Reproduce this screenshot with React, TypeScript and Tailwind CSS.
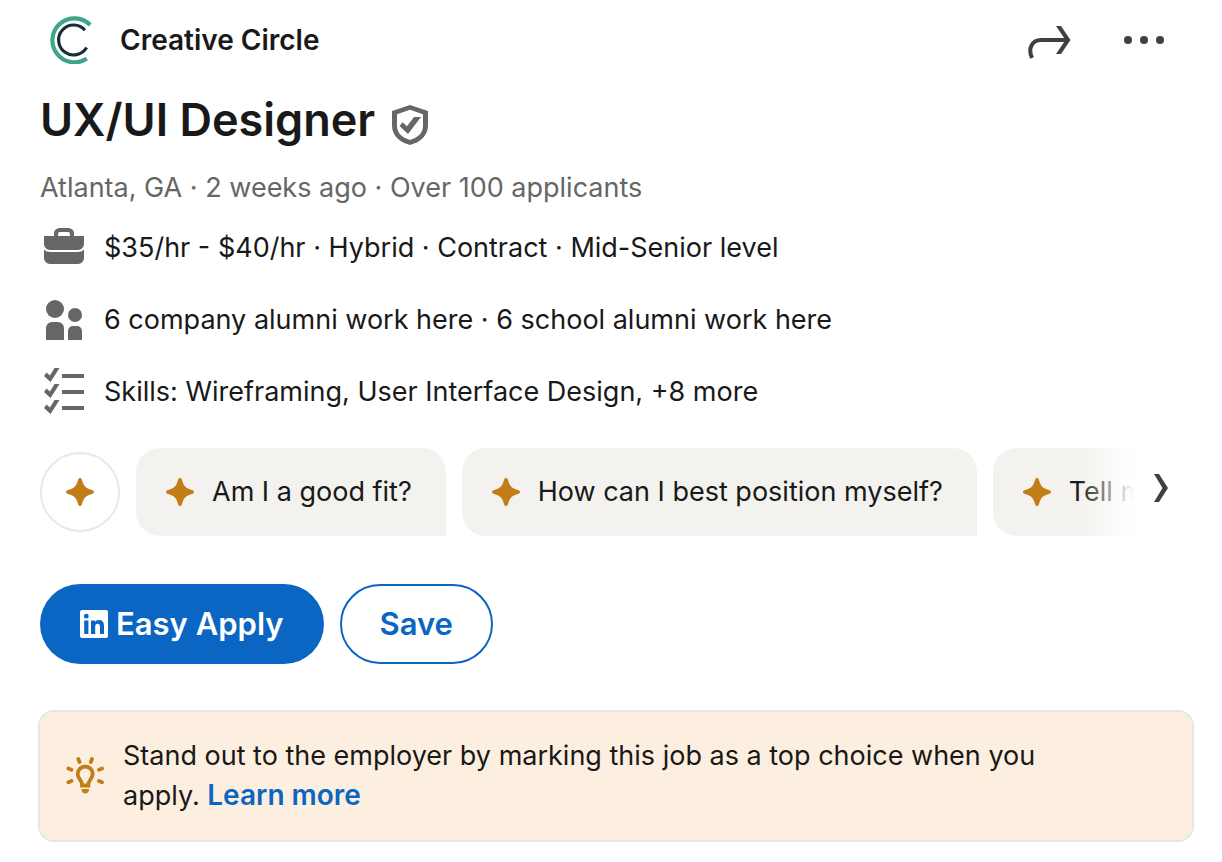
import React from "react";

function Sparkle() {
  return (
    <svg viewBox="0 0 28 28" className="size-7 shrink-0" fill="#c37d16" aria-hidden="true">
      <path d="M14 0c1 0 1.500.6 1.800 1.500l1.200 3.500c1 3 3 5 6 6l3.500 1.200c.9.300 1.500.9 1.500 1.800s-.6 1.500-1.500 1.800L23 17c-3 1-5 3-6 6l-1.200 3.500c-.3.900-.8 1.500-1.800 1.500s-1.500-.6-1.800-1.500L11 23c-1-3-3-5-6-6l-3.500-1.200C.6 15.500 0 14.900 0 14s.6-1.500 1.500-1.800L5 11c3-1 5-3 6-6l1.200-3.500C12.500.6 13 0 14 0z" />
    </svg>
  );
}

function Logo() {
  return (
    <svg viewBox="0 0 48 48" className="size-12" fill="none" aria-hidden="true">
      <path d="M42.200 9A22 22 0 1 0 38.800 42.500" stroke="#3fa588" strokeWidth="4.200" />
      <path d="M37 14.200A15 15 0 1 0 38.600 31.500" stroke="#1c2b3b" strokeWidth="3.200" />
    </svg>
  );
}

function Briefcase() {
  return (
    <svg viewBox="0 0 48 48" className="size-12" fill="#666" aria-hidden="true">
      <path fillRule="evenodd" d="M14 12V9.500A5.500 5.500 0 0 1 19.500 4h9A5.500 5.500 0 0 1 34 9.500V12h10v8a6 6 0 0 1-6 6H10a6 6 0 0 1-6-6v-8zm4 0h12v-2a2 2 0 0 0-2-2h-8a2 2 0 0 0-2 2z" />
      <path d="M4 25.500A8 8 0 0 0 10 28h28a8 8 0 0 0 6-2.500V34a6 6 0 0 1-6 6H10a6 6 0 0 1-6-6z" />
    </svg>
  );
}

function People() {
  return (
    <svg viewBox="0 0 48 48" className="size-12" fill="#666" aria-hidden="true">
      <circle cx="15" cy="13" r="9" />
      <circle cx="35" cy="19" r="7" />
      <path d="M6 44V32a6 6 0 0 1 6-6h6a6 6 0 0 1 6 6v12zM28 44V35a5 5 0 0 1 5-5h4a5 5 0 0 1 5 5v9z" />
    </svg>
  );
}

function Checklist() {
  return (
    <svg viewBox="0 0 48 48" className="size-12" fill="#666" aria-hidden="true">
      <path d="M22 6h22v4H22zM22 22h22v4H22zM22 38h22v4H22z" />
      <path d="M14.500 0h5l-9 14L4 8l2.500-3.500 3.500 3zM14.500 16h5l-9 14L4 24l2.500-3.500 3.500 3zM14.500 32h5l-9 14L4 40l2.500-3.500 3.500 3z" />
    </svg>
  );
}

function Bulb() {
  return (
    <svg viewBox="0 0 40 40" className="size-10 shrink-0" fill="none" stroke="#c37d16" aria-hidden="true">
      <path d="M17 29.500v-1.500c0-1.500-.8-2.500-2-4.300-1.600-2.200-2.300-3.500-2.300-5.700a7.500 7.500 0 0 1 15 0c0 2.200-.7 3.500-2.300 5.700-1.200 1.800-2 2.800-2 4.300v1.500z" strokeWidth="3.800" />
      <path d="M16.500 33h7.500c0 2.500-1.200 4.500-3.700 4.500s-3.800-2-3.800-4.500z" fill="#c37d16" stroke="none" />
      <path d="M13.300 3l1.200 3M27 3l-1.200 3M3.400 12.500l3 1.200M37 12.500l-3 1.200M3.400 26.200l3-1.200M37 26.200l-3-1.200" strokeWidth="3.800" strokeLinecap="round" />
    </svg>
  );
}

function Shield() {
  return (
    <svg viewBox="0 0 36 40" className="h-10 w-9" fill="#666" role="img" aria-label="Verified job">
      <path fillRule="evenodd" d="M18 0l18 6v14c0 9-5 14-11 17.500L18 40l-7-2.500C5 34 0 29 0 20V6zm0 4.800L5 9.300v11c0 7 3.700 10.500 8 12.700l5 2 5-2c4.300-2.200 8-5.700 8-12.700v-11z" />
      <path d="M22 12h7L16 29 7.500 21l3-3.800 4.500 4z" />
    </svg>
  );
}

function LinkedIn() {
  return (
    <svg viewBox="0 0 28 28" className="size-7" fill="#fff" aria-hidden="true">
      <path fillRule="evenodd" d="M2 0h24a2 2 0 0 1 2 2v24a2 2 0 0 1-2 2H2a2 2 0 0 1-2-2V2a2 2 0 0 1 2-2zM4.200 10.500V24h4.200V10.500zM6.300 3.800a2.400 2.400 0 1 0 0 4.800 2.400 2.400 0 0 0 0-4.800zM11 10.500V24h4.200v-7c0-2 .9-3.200 2.500-3.200s2.300 1.100 2.300 3.200v7h4v-8c0-4-2-5.900-4.900-5.900-2 0-3.300.9-4.100 2.200v-1.800z" />
    </svg>
  );
}

const facts = [
  { icon: <Briefcase />, text: "$35/hr - $40/hr · Hybrid · Contract · Mid-Senior level" },
  { icon: <People />, text: "6 company alumni work here · 6 school alumni work here" },
  { icon: <Checklist />, text: "Skills: Wireframing, User Interface Design, +8 more" },
];

const prompts = ["Am I a good fit?", "How can I best position myself?", "Tell me more"];

export default function App() {
  return (
    <main className="bg-white pb-5 pr-7 pl-10 font-['Inter','Liberation_Sans',sans-serif] text-[27px] leading-10 text-[#191919]">
      <header className="flex h-20 items-center justify-between pr-[26px]">
        <a href="#company" className="flex items-center gap-6 pl-2 text-[28px] font-semibold">
          <Logo />
          Creative Circle
        </a>
        <div className="flex items-center gap-12">
          <button type="button" aria-label="Share">
            <svg viewBox="0 0 48 48" className="size-12" fill="none" stroke="#404040" strokeWidth="4" aria-hidden="true">
              <path d="M8 42C3.500 32 8.500 24 17 24h26" />
              <path d="M32 10h5l9.500 14L37 38h-5l9.500-14z" fill="#404040" stroke="none" />
            </svg>
          </button>
          <button type="button" aria-label="More options">
            <svg viewBox="0 0 48 48" className="size-12" fill="#404040" aria-hidden="true">
              <circle cx="8" cy="24" r="4" />
              <circle cx="24" cy="24" r="4" />
              <circle cx="40" cy="24" r="4" />
            </svg>
          </button>
        </div>
      </header>

      <div className="flex h-20 items-center gap-[17px]">
        <h1 className="text-[45px] font-semibold">UX/UI Designer</h1>
        <div className="pt-2.5">
          <Shield />
        </div>
      </div>
      <p className="mt-2 text-[#666]">Atlanta, GA · 2 weeks ago · Over 100 applicants</p>

      <ul className="mt-1">
        {facts.map((fact) => (
          <li key={fact.text} className="flex h-18 items-center gap-4">
            {fact.icon}
            {fact.text}
          </li>
        ))}
      </ul>

      <div className="mt-5 flex items-center gap-2">
        <div className="relative flex min-w-0 flex-1 items-center gap-4 overflow-hidden">
          <button
            type="button"
            aria-label="AI assistant"
            className="flex size-20 shrink-0 items-center justify-center rounded-full border-2 border-[#e8e8e8]"
          >
            <Sparkle />
          </button>
          {prompts.map((prompt) => (
            <button
              key={prompt}
              type="button"
              className="flex h-22 shrink-0 items-center gap-[18px] rounded-3xl rounded-br-none bg-[#f3f2ee] pr-[34px] pl-[30px] whitespace-nowrap"
            >
              <Sparkle />
              {prompt}
            </button>
          ))}
          <div className="pointer-events-none absolute inset-y-0 right-0 w-14 bg-linear-to-r from-transparent to-white" />
        </div>
        <button type="button" aria-label="Next suggestions" className="mr-2 pb-2">
          <svg viewBox="0 0 44 48" className="h-12 w-11" fill="#404040" aria-hidden="true">
            <path d="M12 10h5l9 14-9 14h-5l8.500-14z" />
          </svg>
        </button>
      </div>

      <div className="mt-12 flex gap-4 text-[31px] font-semibold">
        <button type="button" className="flex h-20 items-center gap-2 rounded-full bg-[#0a66c2] px-10 text-white">
          <LinkedIn />
          Easy Apply
        </button>
        <button type="button" className="h-20 rounded-full border-2 border-[#0a66c2] px-[38px] text-[#0a66c2]">
          Save
        </button>
      </div>

      <aside className="mt-[46px] -ml-0.5 flex items-center gap-[18px] rounded-2xl border-2 border-[#e6e6e9] bg-[#fdefdf] py-6 pr-20 pl-[25px]">
        <Bulb />
        <p>
          Stand out to the employer by marking this job as a top choice when you apply.{" "}
          <a href="#learn-more" className="text-[28px] leading-8 font-semibold text-[#0a66c2]">
            Learn more
          </a>
        </p>
      </aside>
    </main>
  );
}
